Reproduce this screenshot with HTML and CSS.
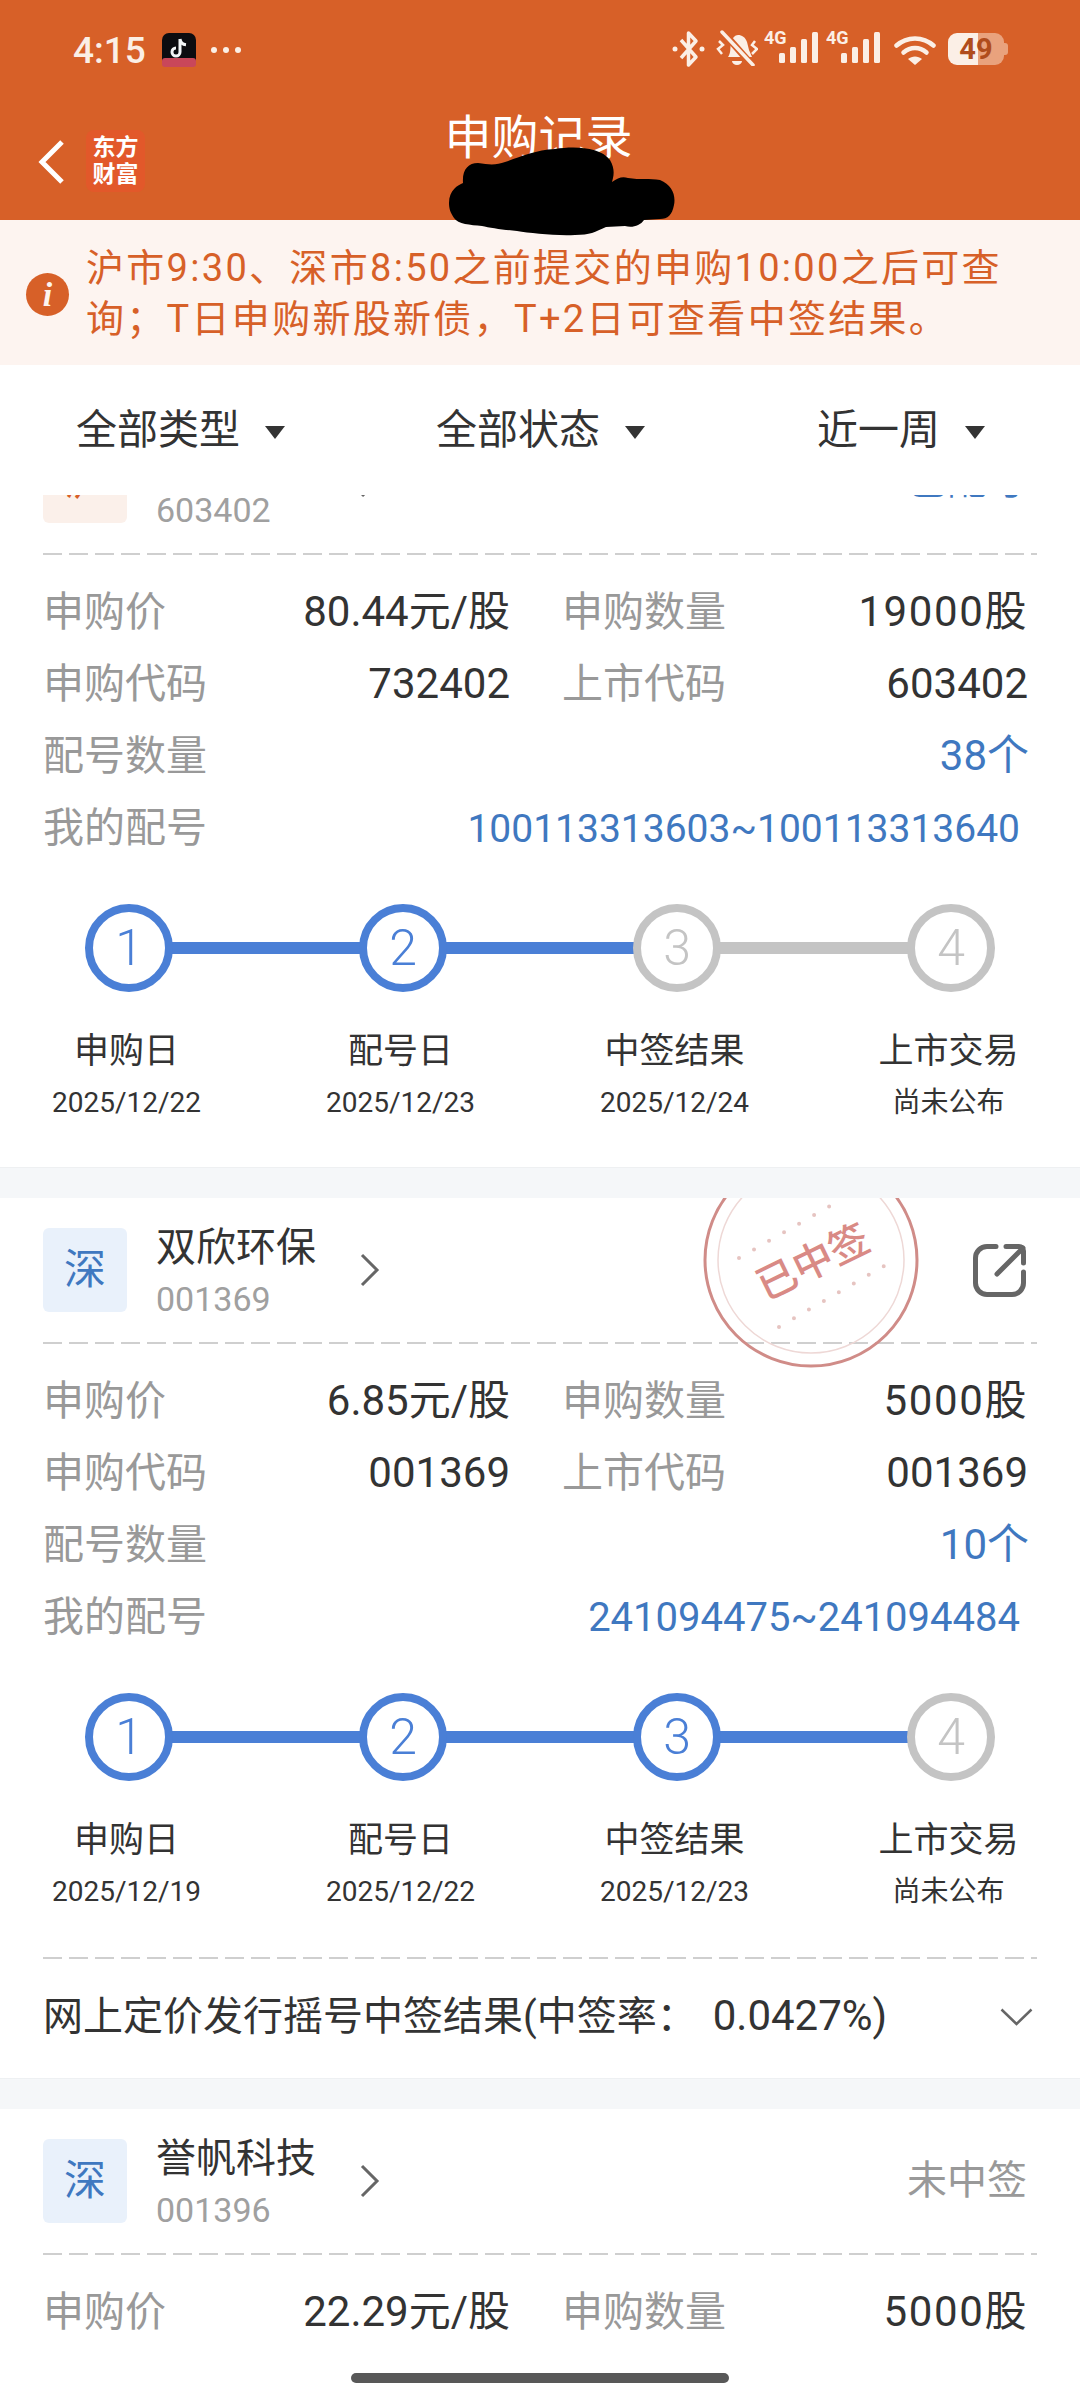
FILE: index.html
```html
<!DOCTYPE html>
<html lang="zh-CN">
<head>
    <meta charset="UTF-8">
    <meta name="viewport" content="width=device-width, initial-scale=1.0">
    <title>申购记录</title>
    <link rel="stylesheet" href="styles.css">
</head>
<body>
<div class="app">
    <header class="topbar">
        <div class="statusbar">
            <span class="time">4:15</span>
            <svg class="tiktok" viewBox="0 0 34 34">
                <rect width="34" height="34" rx="7" fill="#0c0c10"/>
                <rect y="25" width="34" height="9" rx="3" fill="#c9475a"/>
                <path d="M18 6v13a4 4 0 1 1-4-4M18 6c.5 3.5 3 5.500 6 5.800" fill="none" stroke="#f3f5f7" stroke-width="3"/>
            </svg>
            <span class="dots"><i></i><i></i><i></i></span>
            <div class="status-icons">
                <svg class="ic-bt" viewBox="0 0 33 38">
                    <path d="M9 10l15 17-7.500 8V3L24 11 9 28" fill="none" stroke="#fbefe6" stroke-width="3.500" stroke-linejoin="round"/>
                    <circle cx="3" cy="19" r="2.500" fill="#fbefe6"/>
                    <circle cx="30" cy="19" r="2.500" fill="#fbefe6"/>
                </svg>
                <svg class="ic-bell" viewBox="0 0 43 36">
                    <path d="M13 27c3-4 2-9 3-14 1-5 4-8 7-8 4 0 7 2 9 7l2 8 3 7z" fill="#fbefe6"/>
                    <path d="M17 31h10a5 4 0 0 1-10 0z" fill="#fbefe6"/>
                    <path d="M7 1l30 34" stroke="#d76028" stroke-width="7"/>
                    <path d="M7 2l31 33" stroke="#fbefe6" stroke-width="3.500" stroke-linecap="round"/>
                    <path d="M4 11l4 4-5 4 4 5M40 11l-3 4 5 4-5 5" fill="none" stroke="#fbefe6" stroke-width="2.500"/>
                </svg>
                <svg class="ic-signal" viewBox="0 0 54 34">
                    <text class="net" x="0" y="14">4G</text>
                    <rect x="15" y="23" width="6" height="10" rx="1.500" fill="#fbefe6"/>
                    <rect x="26" y="17" width="6" height="16" rx="1.500" fill="#fbefe6"/>
                    <rect x="37" y="9" width="6" height="24" rx="1.500" fill="#fbefe6"/>
                    <rect x="48" y="2" width="6" height="31" rx="1.500" fill="#fbefe6"/>
                </svg>
                <svg class="ic-signal" viewBox="0 0 54 34">
                    <text class="net" x="0" y="14">4G</text>
                    <rect x="15" y="23" width="6" height="10" rx="1.500" fill="#fbefe6"/>
                    <rect x="26" y="17" width="6" height="16" rx="1.500" fill="#fbefe6"/>
                    <rect x="37" y="9" width="6" height="24" rx="1.500" fill="#fbefe6"/>
                    <rect x="48" y="2" width="6" height="31" rx="1.500" fill="#fbefe6"/>
                </svg>
                <svg class="ic-wifi" viewBox="0 0 42 30">
                    <path d="M2.500 10.500C13 1 29 1 39.500 10.500" fill="none" stroke="#fbefe6" stroke-width="4.500" stroke-linecap="round"/>
                    <path d="M9.500 17.500c7-6 16-6 23 0" fill="none" stroke="#fbefe6" stroke-width="4.500" stroke-linecap="round"/>
                    <path d="M14 24c4-3.500 10-3.500 14 0l-7 6z" fill="#fbefe6"/>
                </svg>
                <div class="battery"><span>49</span></div>
            </div>
        </div>
        <div class="navbar">
            <svg class="back" viewBox="0 0 26 44">
                <path d="M24 2L4 22l20 20" fill="none" stroke="#fff" stroke-width="5"/>
            </svg>
            <div class="logo">东方<br>财富</div>
            <h1 class="title">申购记录</h1>
        </div>
    </header>

    <div class="notice">
        <span class="notice-icon">i</span>
        <p>沪市9:30、深市8:50之前提交的申购10:00之后可查询；T日申购新股新债，T+2日可查看中签结果。</p>
    </div>

    <div class="filters">
        <div class="filter">全部类型<i class="caret"></i></div>
        <div class="filter">全部状态<i class="caret"></i></div>
        <div class="filter">近一周<i class="caret"></i></div>
    </div>

    <div class="list">
        <section class="card card-first">
            <div class="card-head">
                <span class="badge badge-sh">沪</span>
                <div class="stock">
                    <div class="stock-name">新股申购</div>
                    <div class="stock-code">603402</div>
                </div>
                <svg class="arrow" viewBox="0 0 20 34"><path d="M2 2l15 15L2 32" fill="none" stroke="#666" stroke-width="3"/></svg>
                <span class="status status-blue">已配号</span>
            </div>
            <div class="dash"></div>
            <div class="details">
                <div class="pair"><span class="key">申购价</span><span class="val">80.44元/股</span></div>
                <div class="pair"><span class="key">申购数量</span><span class="val val-qty">19000股</span></div>
                <div class="pair"><span class="key">申购代码</span><span class="val">732402</span></div>
                <div class="pair"><span class="key">上市代码</span><span class="val">603402</span></div>
                <div class="pair pair-wide"><span class="key">配号数量</span><span class="val val-blue">38个</span></div>
                <div class="pair pair-wide"><span class="key">我的配号</span><span class="val val-blue val-long val-fit">100113313603~100113313640</span></div>
            </div>
            <div class="steps">
                <div class="step done"><div class="circle">1</div><div class="step-name">申购日</div><div class="step-date">2025/12/22</div></div>
                <div class="step done"><div class="circle">2</div><div class="step-name">配号日</div><div class="step-date">2025/12/23</div></div>
                <div class="step"><div class="circle">3</div><div class="step-name">中签结果</div><div class="step-date">2025/12/24</div></div>
                <div class="step"><div class="circle">4</div><div class="step-name">上市交易</div><div class="step-date">尚未公布</div></div>
            </div>
        </section>

        <section class="card">
            <svg class="stamp" viewBox="0 0 224 224">
                <circle cx="112" cy="112" r="106" fill="none" stroke="#d08c88" stroke-width="3"/>
                <circle cx="112" cy="112" r="93" fill="none" stroke="#eed8d6" stroke-width="1.500"/>
                <path d="M40 110L145 50M80 179L185 118" fill="none" stroke="#e6c4c1" stroke-width="4" stroke-linecap="round" stroke-dasharray="0 17.300"/>
                <text class="stamp-text" x="114" y="128" transform="rotate(-26 114 114)">已中签</text>
            </svg>
            <div class="card-head">
                <span class="badge">深</span>
                <div class="stock">
                    <div class="stock-name">双欣环保</div>
                    <div class="stock-code">001369</div>
                </div>
                <svg class="arrow" viewBox="0 0 20 34"><path d="M2 2l15 15L2 32" fill="none" stroke="#666" stroke-width="3"/></svg>
                <svg class="share" viewBox="0 0 53 53">
                    <path d="M23 2.500H14A11.500 11.500 0 0 0 2.500 14v25A11.500 11.500 0 0 0 14 50.500h25A11.500 11.500 0 0 0 50.500 39V28" fill="none" stroke="#666" stroke-width="5" stroke-linecap="round"/>
                    <path d="M24 30L50 4M33 2.500h13a4.500 4.500 0 0 1 4.500 4.500v12" fill="none" stroke="#666" stroke-width="5" stroke-linecap="round"/>
                </svg>
            </div>
            <div class="dash"></div>
            <div class="details">
                <div class="pair"><span class="key">申购价</span><span class="val">6.85元/股</span></div>
                <div class="pair"><span class="key">申购数量</span><span class="val val-qty">5000股</span></div>
                <div class="pair"><span class="key">申购代码</span><span class="val">001369</span></div>
                <div class="pair"><span class="key">上市代码</span><span class="val">001369</span></div>
                <div class="pair pair-wide"><span class="key">配号数量</span><span class="val val-blue">10个</span></div>
                <div class="pair pair-wide"><span class="key">我的配号</span><span class="val val-blue val-long">241094475~241094484</span></div>
            </div>
            <div class="steps">
                <div class="step done"><div class="circle">1</div><div class="step-name">申购日</div><div class="step-date">2025/12/19</div></div>
                <div class="step done"><div class="circle">2</div><div class="step-name">配号日</div><div class="step-date">2025/12/22</div></div>
                <div class="step done"><div class="circle">3</div><div class="step-name">中签结果</div><div class="step-date">2025/12/23</div></div>
                <div class="step"><div class="circle">4</div><div class="step-name">上市交易</div><div class="step-date">尚未公布</div></div>
            </div>
            <div class="dash dash-result"></div>
            <div class="result">
                <span>网上定价发行摇号中签结果(中签率：<span class="rate">0.0427%)</span></span>
                <svg class="chevron" viewBox="0 0 33 18"><path d="M1.500 1.500L16.500 16l15-14.500" fill="none" stroke="#666" stroke-width="2.500"/></svg>
            </div>
        </section>

        <section class="card card-last">
            <div class="card-head">
                <span class="badge">深</span>
                <div class="stock">
                    <div class="stock-name">誉帆科技</div>
                    <div class="stock-code">001396</div>
                </div>
                <svg class="arrow" viewBox="0 0 20 34"><path d="M2 2l15 15L2 32" fill="none" stroke="#666" stroke-width="3"/></svg>
                <span class="status">未中签</span>
            </div>
            <div class="dash"></div>
            <div class="details">
                <div class="pair"><span class="key">申购价</span><span class="val">22.29元/股</span></div>
                <div class="pair"><span class="key">申购数量</span><span class="val val-qty">5000股</span></div>
            </div>
        </section>
    </div>

    <!-- redaction scribble from the original screenshot -->
    <svg class="blob" viewBox="0 0 1080 2400">
        <path d="M449 203C449 190 458 185 463 183C462 170 468 163 478 163C490 165 497 165 505 162C520 157 535 150 555 149C575 146 600 147 610 160C616 170 613 178 612 182C618 178 622 176 628 178C640 180 650 178 660 180C672 185 676 195 674 205C672 215 668 219 660 219L644 220C640 226 632 228 625 226L606 227C595 232 590 235 575 235C555 236 530 233 517 231C505 230 490 228 482 226C470 225 458 224 454 218C450 212 449 208 449 203Z" fill="#000"/>
    </svg>
    <div class="home-bar"></div>
</div>
</body>
</html>
```

FILE: styles.css
```css
* {
    margin: 0;
    padding: 0;
    box-sizing: border-box;
}

body {
    font-family: Roboto, "Noto Sans CJK SC", sans-serif;
    background: #fff;
    color: #333;
}

.app {
    position: relative;
    width: 1080px;
    height: 2400px;
    overflow: hidden;
    display: flex;
    flex-direction: column;
}

/* top bar */
.topbar {
    height: 220px;
    flex: none;
    background: #d76028;
    color: #fff;
}

.statusbar {
    height: 100px;
    padding: 31px 72px 0 73px;
    display: flex;
    align-items: flex-start;
    color: #fbefe6;
}

.time {
    font-size: 37px;
    font-weight: 500;
    line-height: 40px;
    width: 89px;
}

.tiktok {
    width: 34px;
    height: 34px;
    margin-top: 2px;
}

.dots {
    display: flex;
    gap: 6px;
    margin: 16px 0 0 15px;
}

.dots i {
    width: 6px;
    height: 6px;
    border-radius: 50%;
    background: #fbefe6;
}

.status-icons {
    margin: -1px 0 0 auto;
    display: flex;
    align-items: flex-start;
}

.ic-bt {
    width: 33px;
    height: 38px;
}

.ic-bell {
    width: 43px;
    height: 36px;
    margin-left: 10px;
}

.ic-signal {
    width: 54px;
    height: 34px;
    margin: 0 0 0 6px;
}

.ic-signal + .ic-signal {
    margin-left: 8px;
}

.net {
    font-family: Roboto, sans-serif;
    font-size: 18px;
    font-weight: 700;
    fill: #fbefe6;
}

.ic-wifi {
    width: 42px;
    height: 30px;
    margin: 5px 0 0 14px;
}

.battery {
    position: relative;
    width: 56px;
    height: 32px;
    margin: 3px 4px 0 12px;
    border-radius: 9px;
    background: linear-gradient(to right, #fbefe6 53%, #e9a27d 53%);
    color: #b04c1c;
    font-size: 29px;
    font-weight: 700;
    line-height: 32px;
    text-align: center;
}

.battery::after {
    content: "";
    position: absolute;
    right: -4px;
    top: 10px;
    width: 4px;
    height: 12px;
    border-radius: 0 3px 3px 0;
    background: #e9a27d;
}

.navbar {
    position: relative;
    height: 120px;
    display: flex;
    align-items: flex-start;
}

.back {
    width: 26px;
    height: 44px;
    margin: 40px 0 0 38px;
}

.logo {
    width: 59px;
    height: 62px;
    margin: 30px 0 0 22px;
    padding-top: 4px;
    border-radius: 8px;
    background: #e2582a;
    font-size: 23px;
    font-weight: 700;
    line-height: 27px;
    text-align: center;
}

.title {
    position: absolute;
    left: 0;
    right: 0;
    top: 11px;
    font-size: 47px;
    font-weight: 400;
    line-height: 54px;
    text-align: center;
    padding-right: 3px;
}

/* notice */
.notice {
    height: 145px;
    flex: none;
    padding: 0 24px 0 26px;
    display: flex;
    align-items: center;
    gap: 17px;
    background: #fdf4f0;
    color: #d76028;
}

.notice-icon {
    flex: none;
    width: 43px;
    height: 43px;
    margin-top: 4px;
    border-radius: 50%;
    background: #d76028;
    color: #fdf4f0;
    font-family: "Liberation Serif", serif;
    font-size: 34px;
    font-style: italic;
    font-weight: 700;
    line-height: 43px;
    text-align: center;
}

.notice p {
    width: 930px;
    padding-top: 3px;
    font-size: 38px;
    letter-spacing: 2.3px;
    line-height: 51px;
}

/* filters */
.filters {
    height: 130px;
    flex: none;
    padding-left: 76px;
    display: grid;
    grid-template-columns: 360px 381px auto;
    align-items: center;
    background: #fff;
}

.filter {
    display: flex;
    align-items: center;
    font-size: 41px;
    line-height: 50px;
}

.caret {
    width: 0;
    height: 0;
    margin: 4px 0 0 25px;
    border-left: 10px solid transparent;
    border-right: 10px solid transparent;
    border-top: 13px solid #333;
}

/* list */
.list {
    flex: 1;
    overflow: hidden;
    background: #f5f7f9;
}

.card {
    position: relative;
    overflow: hidden;
    padding: 30px 50px 0 43px;
    margin-bottom: 30px;
    background: #fff;
    border-bottom: 1px solid #eef0f2;
}

.card-first {
    margin-top: -86px;
    padding-bottom: 44px;
}

.card-last {
    height: 300px;
    margin-bottom: 0;
}

.card-head {
    height: 84px;
    display: flex;
    align-items: center;
}

.badge {
    flex: none;
    width: 84px;
    height: 84px;
    border-radius: 6px;
    background: #e9f1fb;
    color: #3f78c0;
    font-size: 42px;
    line-height: 84px;
    text-align: center;
}

.badge-sh {
    background: #fbf0ea;
    color: #d76028;
}

.stock {
    width: 204px;
    margin-left: 29px;
}

.stock-name {
    padding-top: 2px;
    font-size: 40px;
    line-height: 44px;
}

.stock-code {
    margin-top: 11px;
    color: #a0a0a0;
    font-size: 34px;
    line-height: 36px;
}

.arrow {
    flex: none;
    width: 20px;
    height: 34px;
}

.status {
    margin-left: auto;
    margin-right: 3px;
    color: #999;
    font-size: 40px;
    line-height: 50px;
}

.status-blue {
    color: #3f78c0;
}

.share {
    flex: none;
    width: 53px;
    height: 53px;
    margin-left: auto;
    margin-right: 4px;
}

.stamp {
    position: absolute;
    left: 699px;
    top: -50px;
    width: 224px;
    height: 224px;
}

.stamp-text {
    font-size: 40px;
    font-weight: 500;
    fill: #d98a85;
    text-anchor: middle;
}

.dash {
    height: 2px;
    margin: 30px -7px 0 0;
    background: repeating-linear-gradient(to right, #cfcfcf 0 19px, transparent 19px 26px);
}

.dash-result {
    margin-top: 45px;
}

.details {
    display: grid;
    grid-template-columns: 467px 465px;
    column-gap: 52px;
    padding-top: 21px;
}

.pair {
    height: 72px;
    display: flex;
    align-items: baseline;
    justify-content: space-between;
    line-height: 72px;
}

.pair:nth-child(even):not(.pair-wide) {
    margin-right: -1px;
}

.pair-wide {
    grid-column: 1 / 3;
    margin-right: -2px;
}

.key {
    color: #999;
    font-size: 41px;
}

.val {
    font-size: 42px;
}

.val-qty {
    letter-spacing: 1.6px;
}

.val-blue {
    color: #3f78c0;
}

.val-long {
    font-size: 40px;
    padding-right: 9px;
}

.val-fit {
    font-size: 39px;
}

/* progress steps */
.steps {
    display: grid;
    grid-template-columns: repeat(4, 274px);
    margin: 40px 0 0 -51px;
}

.step {
    position: relative;
    display: flex;
    flex-direction: column;
    align-items: center;
}

.step::after {
    content: "";
    position: absolute;
    left: 137px;
    top: 38px;
    width: 274px;
    height: 12px;
    background: #c4c4c4;
}

.step:last-child::after {
    display: none;
}

.step.done::after {
    background: #4a7fd6;
}

.circle {
    position: relative;
    z-index: 1;
    width: 88px;
    height: 88px;
    border: 8px solid #c4c4c4;
    border-radius: 50%;
    background: #fff;
    color: #c4c4c4;
    font-size: 50px;
    font-weight: 300;
    line-height: 72px;
    text-align: center;
}

.step.done .circle {
    border-color: #4a7fd6;
    color: #4a7fd6;
}

.step-name {
    margin: 38px 5px 0 0;
    font-size: 35px;
    line-height: 44px;
}

.step-date {
    margin: 9px 5px 0 0;
    font-size: 28px;
    line-height: 40px;
}

.result {
    height: 119px;
    padding-bottom: 12px;
    display: flex;
    align-items: center;
    justify-content: space-between;
    margin-right: -3px;
    font-size: 40px;
}

.rate {
    margin-left: 16px;
    font-size: 42px;
}

.chevron {
    width: 33px;
    height: 18px;
    margin: 8px 0 0;
}

/* overlays */
.blob {
    position: absolute;
    left: 0;
    top: 0;
    width: 1080px;
    height: 2400px;
    pointer-events: none;
}

.home-bar {
    position: absolute;
    left: 351px;
    top: 2373px;
    width: 378px;
    height: 10px;
    border-radius: 5px;
    background: #585858;
}
```
